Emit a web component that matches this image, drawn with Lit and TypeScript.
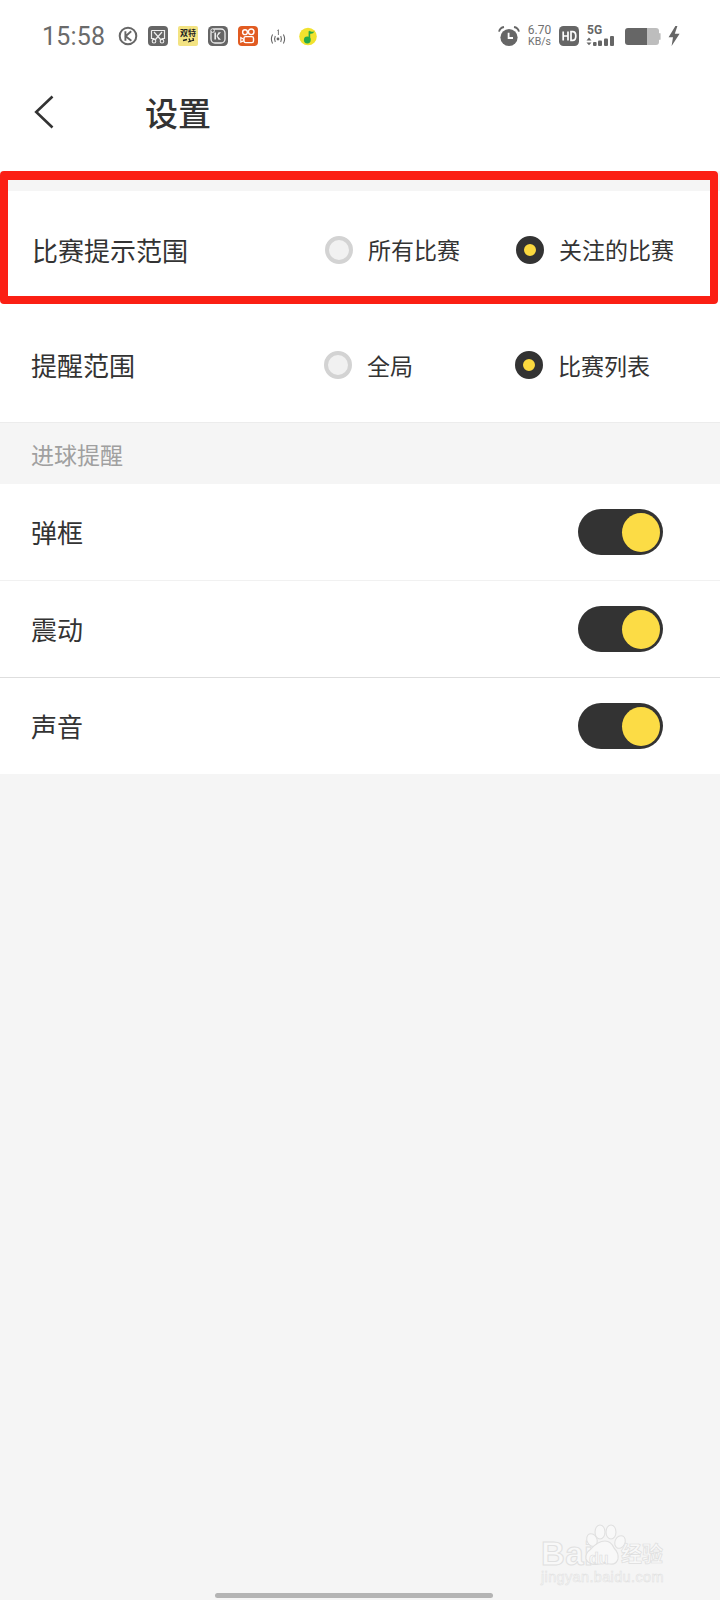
import { LitElement, html, css, svg } from "lit";
import { customElement } from "lit/decorators.js";

const radio = (on: boolean, label: string) => html`
  <div class="opt">
    <span class="radio ${on ? "on" : "off"}"></span>
    <span class="opt-label">${label}</span>
  </div>`;

const toggle = () => html`<span class="toggle"><span class="knob"></span></span>`;

const kIcon = svg`<circle cx="10" cy="10" r="8.3" fill="none" stroke="#666" stroke-width="2"/>
  <path d="M7.4 5.2V14.8M13.2 5.2L7.6 10.2L13.4 14.8" fill="none" stroke="#666" stroke-width="1.9"/>`;

const scissorIcon = svg`<rect width="20" height="20" rx="4" fill="#666"/>
  <path d="M3.5 4.5H16.5V12.5H13.5M3.5 4.5V12.5H6.5" fill="none" stroke="#eee" stroke-width="1.2"/>
  <path d="M6 6L13 14M14 6L7 14" stroke="#eee" stroke-width="1.2"/>
  <circle cx="6" cy="15.2" r="1.8" fill="none" stroke="#eee" stroke-width="1.1"/>
  <circle cx="14" cy="15.2" r="1.8" fill="none" stroke="#eee" stroke-width="1.1"/>`;

const yellowIcon = svg`<rect width="20" height="20" rx="2" fill="#f3e382"/>
  <text x="10" y="10" text-anchor="middle" font-size="8" font-weight="700" fill="#222" font-family="'Noto Sans CJK SC',sans-serif">双特</text>
  <path d="M5 14.5L9 13.5M11 12.5L12.5 16M15 12L15.5 15M10 16L16 14" stroke="#222" stroke-width="1.3"/>`;

const kwaiIcon = svg`<rect width="20" height="20" rx="4.5" fill="#666"/>
  <rect x="3" y="3" width="14" height="14" rx="4" fill="none" stroke="#eee" stroke-width="1.3"/>
  <circle cx="4.6" cy="4.6" r="1.8" fill="#666" stroke="#eee" stroke-width="1"/>
  <path d="M7.2 6.5V13.5" stroke="#eee" stroke-width="1.6"/>
  <path d="M13 6.3L9.6 10L13 13.7H10.5L8.5 10L10.5 6.3Z" fill="#eee"/>`;

const kuaiIcon = svg`<rect width="20" height="20" rx="4" fill="#e15b21"/>
  <circle cx="7" cy="6.2" r="2.4" fill="none" stroke="#fff" stroke-width="1.4"/>
  <circle cx="13.2" cy="5.8" r="2.8" fill="none" stroke="#fff" stroke-width="1.4"/>
  <rect x="6" y="10.6" width="9.5" height="6" rx="1.6" fill="none" stroke="#fff" stroke-width="1.4"/>
  <path d="M6 13.4L2.8 11.6V16L6 14.6" fill="none" stroke="#fff" stroke-width="1.2"/>`;

const castIcon = svg`<path d="M4.6 8.5Q2.2 13 4.6 17.5M7.3 10Q5.8 13 7.3 16M15.4 8.5Q17.8 13 15.4 17.5M12.7 10Q14.2 13 12.7 16" fill="none" stroke="#666" stroke-width="1.1"/>
  <circle cx="10" cy="13" r="1.4" fill="#666"/>
  <path d="M9.4 4.6L10.4 3.8V9" fill="none" stroke="#666" stroke-width="0.9"/>`;

const musicIcon = svg`<circle cx="10" cy="10.5" r="8.8" fill="#f1e22e"/>
  <circle cx="9.3" cy="14" r="3.4" fill="#25a84a"/>
  <path d="M11.4 14V5.2" stroke="#25a84a" stroke-width="1.6"/>
  <path d="M11.4 4.6Q13 6.8 16.6 5.2Q14.6 8.6 11.4 7.4Z" fill="#25a84a"/>`;

const alarmIcon = svg`<circle cx="11" cy="11.5" r="8.6" fill="#666"/>
  <path d="M10.6 6.8V12H15" fill="none" stroke="#fff" stroke-width="1.8"/>
  <path d="M1 5.6Q2 1.6 6 1M21 5.6Q20 1.6 16 1" fill="none" stroke="#666" stroke-width="1.8"/>`;

const hdIcon = svg`<rect width="20" height="20" rx="4.5" fill="#666"/>
  <path d="M4.2 5.4V14.6M9 5.4V14.6M4.2 10H9" stroke="#fff" stroke-width="1.7" fill="none"/>
  <path d="M12 5.6H13.6Q16.8 5.6 16.8 10Q16.8 14.4 13.6 14.4H12Z" stroke="#fff" stroke-width="1.7" fill="none"/>`;

const sigIcon = svg`<path d="M0.5 14.5L3 11.6L5.5 14.5ZM0.5 16.4L3 19.2L5.5 16.4Z" fill="#666"/>
  <rect x="12" y="14.5" width="4" height="5.5" rx="1" fill="#666"/>
  <rect x="18" y="12.5" width="4" height="7.5" rx="1" fill="#666"/>
  <rect x="24" y="10" width="4" height="10" rx="1" fill="#666"/>
  <rect x="7" y="16" width="3.6" height="4" rx="1" fill="#666"/>`;

const batIcon = svg`<path d="M4 1H23V18H4Q1 18 1 15V4Q1 1 4 1Z" fill="#666"/>
  <path d="M23 1H32Q35 1 35 4V15Q35 18 32 18H23Z" fill="#bdbdbd"/>
  <rect x="35" y="6" width="1.6" height="7" rx="0.8" fill="#bdbdbd"/>`;

const boltIcon = svg`<path d="M7.4 0L0.6 11.2H5L3.6 20L11.6 7.8H6.8L9.4 0Z" fill="#666"/>`;

@customElement("app-root")
export class AppRoot extends LitElement {
  static styles = css`
    :host {
      display: flex;
      flex-direction: column;
      position: relative;
      width: 720px;
      height: 1600px;
      overflow: hidden;
      background: #f5f5f5;
      color: #333;
      font-family: "Noto Sans CJK SC", "Noto Sans", sans-serif;
    }
    .head { background: #fff; height: 171px; flex: none; }
    .status {
      height: 72px;
      padding: 0 40px 0 42px;
      display: flex;
      align-items: center;
      justify-content: space-between;
    }
    .left, .right { display: flex; align-items: center; }
    .time {
      width: 76px;
      font: 400 25px/1 Roboto, sans-serif;
      color: #6a6a6a;
      letter-spacing: 0.2px;
    }
    .icons { display: flex; gap: 10px; align-items: center; }
    .icons svg { width: 20px; height: 20px; display: block; }
    .right { gap: 7px; }
    .right svg { display: block; }
    .speed {
      width: 25px;
      display: flex;
      flex-direction: column;
      align-items: center;
      font: 400 12px/11px Roboto, sans-serif;
      color: #707070;
    }
    .speed .u { font-size: 10.5px; }
    .sig { position: relative; width: 31px; height: 20px; }
    .sig b {
      position: absolute;
      left: 1px;
      top: -2px;
      font: 700 12px/12px Roboto, sans-serif;
      color: #666;
    }
    .nav {
      height: 80px;
      display: flex;
      align-items: center;
      padding-left: 34px;
    }
    .nav svg { display: block; flex: none; }
    .title {
      margin-left: 91px;
      font-size: 33px;
      line-height: 1;
      font-weight: 500;
      color: #333;
    }
    .strip { height: 20px; flex: none; }
    .radios { background: #fff; flex: none; }
    .rrow {
      display: grid;
      grid-template-columns: 293px 191px 1fr;
      align-items: center;
      padding-left: 32px;
    }
    .rrow.a { height: 117px; }
    .rrow.b { height: 115px; border-bottom: 1px solid #ececec; box-sizing: border-box; height: 115px; padding-left: 31px; }
    .label { font-size: 26px; line-height: 1; white-space: nowrap; }
    .opt { display: flex; align-items: center; gap: 15px; }
    .opt-label { font-size: 23px; line-height: 1; white-space: nowrap; }
    .radio { width: 28px; height: 28px; box-sizing: border-box; border-radius: 50%; flex: none; }
    .radio.off { border: 4px solid #d3d3d3; background: #f1f1f1; }
    .radio.on { border: 8px solid #333; background: #fbd93f; }
    .section {
      height: 61px;
      flex: none;
      display: flex;
      align-items: center;
      padding-left: 31px;
      font-size: 23px;
      color: #a0a0a0;
      box-sizing: border-box;
    }
    .tlist { background: #fff; flex: none; }
    .trow {
      height: 97px;
      box-sizing: border-box;
      display: flex;
      align-items: center;
      justify-content: space-between;
      padding: 0 57px 0 31px;
      border-bottom: 1px solid #f1f1f1;
    }
    .trow.strong { border-bottom-color: #dedede; }
    .trow:last-child { border-bottom: none; height: 96px; }
    .toggle {
      width: 85px;
      height: 46px;
      box-sizing: border-box;
      padding: 4px 3px 3px 0;
      border-radius: 23px;
      background: #333;
      display: flex;
      justify-content: flex-end;
    }
    .knob { width: 38px; height: 39px; border-radius: 50%; background: #fcdc45; }
    .fill { flex: 1; }
    .home {
      flex: none;
      align-self: flex-start;
      margin: 0 0 2px 215px;
      width: 278px;
      height: 5px;
      border-radius: 3px;
      background: #b4b4b4;
    }
    .mark {
      position: absolute;
      left: 540px;
      top: 1522px;
      width: 125px;
      height: 62px;
      color: #f8f8f8;
    }
    .mark svg { position: absolute; left: 0; top: 0; }
    .mark .bai {
      position: absolute;
      left: 1px;
      top: 14px;
      font: 700 33px/36px "Liberation Sans", sans-serif;
      letter-spacing: 0.4px;
      -webkit-text-stroke: 1px #e0e0e0;
    }
    .mark .du {
      position: absolute;
      left: 49px;
      top: 28px;
      font: 700 16px/18px "Liberation Sans", sans-serif;
      -webkit-text-stroke: 0.6px #dcdcdc;
    }
    .mark .jy {
      position: absolute;
      left: 81px;
      top: 17px;
      font-size: 21px;
      line-height: 27px;
      font-weight: 700;
      white-space: nowrap;
      -webkit-text-stroke: 0.7px #dedede;
    }
    .mark .dom {
      position: absolute;
      left: 1px;
      top: 47px;
      font: 400 14.5px/16px "Liberation Sans", sans-serif;
      letter-spacing: 0.35px;
      white-space: nowrap;
      -webkit-text-stroke: 0.5px #e0e0e0;
    }
    .redbox {
      position: absolute;
      left: 0;
      top: 171px;
      width: 718px;
      height: 133px;
      box-sizing: border-box;
      border: 8px solid #fb1f14;
      border-top-width: 9px;
      border-radius: 4px;
      pointer-events: none;
    }
  `;

  render() {
    return html`
      <div class="head">
        <div class="status">
          <div class="left">
            <span class="time">15:58</span>
            <div class="icons">
              <svg viewBox="0 0 20 20">${kIcon}</svg>
              <svg viewBox="0 0 20 20">${scissorIcon}</svg>
              <svg viewBox="0 0 20 20">${yellowIcon}</svg>
              <svg viewBox="0 0 20 20">${kwaiIcon}</svg>
              <svg viewBox="0 0 20 20">${kuaiIcon}</svg>
              <svg viewBox="0 0 20 20">${castIcon}</svg>
              <svg viewBox="0 0 20 20">${musicIcon}</svg>
            </div>
          </div>
          <div class="right">
            <svg width="22" height="21" viewBox="0 0 22 21">${alarmIcon}</svg>
            <div class="speed"><span>6.70</span><span class="u">KB/s</span></div>
            <svg width="20" height="20" viewBox="0 0 20 20">${hdIcon}</svg>
            <div class="sig"><b>5G</b><svg width="31" height="20" viewBox="0 0 31 20">${sigIcon}</svg></div>
            <svg width="37" height="19" viewBox="0 0 37 19">${batIcon}</svg>
            <svg width="12" height="20" viewBox="0 0 12 20">${boltIcon}</svg>
          </div>
        </div>
        <div class="nav">
          <svg width="20" height="34" viewBox="0 0 20 34">
            <path d="M18.5 1.5L2.2 17L18.5 32.5" fill="none" stroke="#333" stroke-width="2.6"/>
          </svg>
          <span class="title">设置</span>
        </div>
      </div>
      <div class="strip"></div>
      <div class="radios">
        <div class="rrow a">
          <span class="label">比赛提示范围</span>
          ${radio(false, "所有比赛")}
          ${radio(true, "关注的比赛")}
        </div>
        <div class="rrow b">
          <span class="label">提醒范围</span>
          ${radio(false, "全局")}
          ${radio(true, "比赛列表")}
        </div>
      </div>
      <div class="section">进球提醒</div>
      <div class="tlist">
        <div class="trow"><span class="label">弹框</span>${toggle()}</div>
        <div class="trow strong"><span class="label">震动</span>${toggle()}</div>
        <div class="trow"><span class="label">声音</span>${toggle()}</div>
      </div>
      <div class="fill"></div>
      <div class="home"></div>
      <div class="mark">
        <span class="bai">Bai</span>
        <svg width="125" height="62" viewBox="0 0 125 62">
          <g fill="#f8f8f8" stroke="#e0e0e0" stroke-width="1.1">
            <ellipse cx="52" cy="18" rx="5" ry="6.5" transform="rotate(-25 52 18)"/>
            <ellipse cx="60" cy="10" rx="5" ry="7"/>
            <ellipse cx="71" cy="10" rx="5" ry="7"/>
            <ellipse cx="80" cy="20" rx="5" ry="6.5" transform="rotate(25 80 20)"/>
            <path d="M65 19Q71 19 74 26Q79 31 78 37Q76 43 70 42Q65 41 60 42Q49 44 46 37Q45 31 51 27Q58 19 65 19Z"/>
          </g>
        </svg>
        <span class="du">du</span>
        <span class="jy">经验</span>
        <span class="dom">jingyan.baidu.com</span>
      </div>
      <div class="redbox"></div>
    `;
  }
}
